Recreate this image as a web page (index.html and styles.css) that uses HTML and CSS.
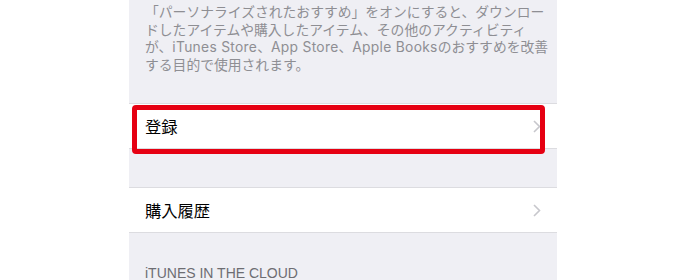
FILE: index.html
```html
<!DOCTYPE html>
<html lang="ja">
<head>
<meta charset="utf-8">
<link rel="stylesheet" href="styles.css">
</head>
<body>
<div class="screen">
  <p class="note">「パーソナライズされたおすすめ」をオンにすると、ダウンロー<br>ドしたアイテムや購入したアイテム、その他のアクティビティ<br>が、<span class="lat">iTunes Store</span>、<span class="lat">App Store</span>、<span class="lat">Apple Books</span>のおすすめを改善<br>する目的で使用されます。</p>

  <div class="group group-first">
    <div class="row">
      <span class="label">登録</span>
      <svg class="chev" width="8" height="13" viewBox="0 0 8 13"><path d="M1 1 L6.5 6.5 L1 12" fill="none" stroke="#c7c7cc" stroke-width="1.6"/></svg>
      <div class="highlight"></div>
    </div>
  </div>

  <div class="group group-second">
    <div class="row">
      <span class="label">購入履歴</span>
      <svg class="chev" width="8" height="13" viewBox="0 0 8 13"><path d="M1 1 L6.5 6.5 L1 12" fill="none" stroke="#c7c7cc" stroke-width="1.6"/></svg>
    </div>
  </div>

  <div class="section-header">iTUNES IN THE CLOUD</div>
</div>
</body>
</html>
```

FILE: styles.css
```css
html, body {
  margin: 0;
  padding: 0;
  background: #ffffff;
}

body {
  font-family: "Liberation Sans", "Noto Sans CJK JP", sans-serif;
  height: 280px;
  overflow: hidden;
}

.screen {
  width: 428px;
  height: 280px;
  margin-left: 129px;
  background: #efeff4;
  display: flex;
  flex-direction: column;
  overflow: hidden;
}

.note {
  margin: 0;
  padding: 4px 16px 0;
  font-size: 13.8px;
  line-height: 17.5px;
  color: #8e8e93;
  white-space: nowrap;
}

.lat {
  font-family: "Inter", "Liberation Sans", sans-serif;
  letter-spacing: 0.3px;
}

.group {
  background: #ffffff;
  border-top: 1px solid #dcdce0;
  border-bottom: 1px solid #dcdce0;
}

.group-first {
  margin-top: 29px;
}

.group-second {
  margin-top: 38px;
}

.row {
  position: relative;
  height: 44px;
  display: flex;
  align-items: center;
  justify-content: space-between;
  padding: 0 16px;
}

.label {
  font-size: 16.3px;
  color: #000000;
}

.chev {
  display: block;
}

.highlight {
  position: absolute;
  left: 3px;
  top: 1px;
  width: 403px;
  height: 39px;
  border: 5px solid #e60012;
  border-radius: 4px;
}

.section-header {
  margin-top: 32px;
  padding: 0 16px;
  font-size: 14px;
  line-height: 17px;
  color: #6d6d72;
}
```
